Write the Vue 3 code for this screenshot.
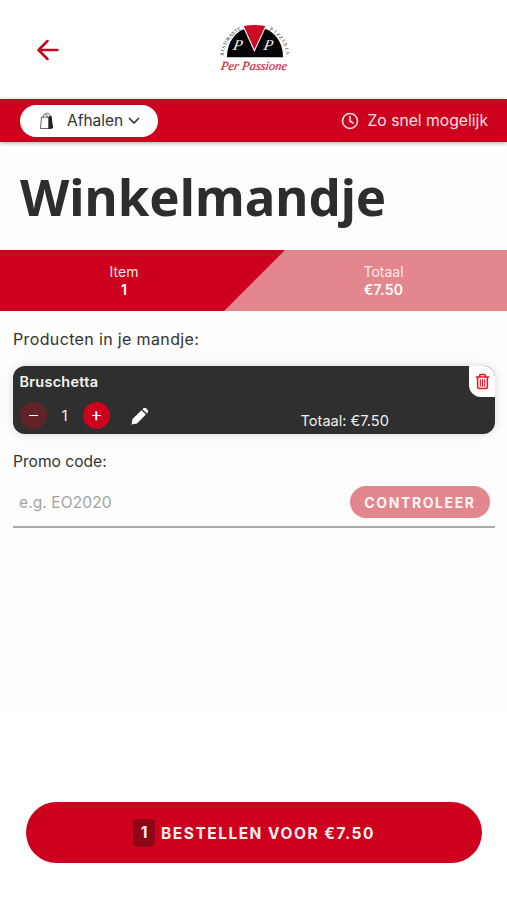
<script setup>
  import { ref, computed } from "vue"

  const price = 7.5
  const count = ref(1)
  const promo = ref("")

  const total = computed(() => "€" + (price * count.value).toFixed(2))

  // letters around the dome of the logo, angles measured from the top
  const arc = [...spread("RISTORANTE", -83, -29), ...spread("PIZZERIA", 30, 81)]

  function spread(word, from, to) {
    const step = (to - from) / (word.length - 1)
    return [...word].map((letter, i) => ({ letter, angle: from + i * step }))
  }

  function decrease() {
    if (count.value > 1) count.value--
  }
</script>

<template>
  <div class="page">
    <header class="header">
      <svg class="back" viewBox="0 0 24 22" fill="none" stroke="#c40a22" stroke-width="2.5" stroke-linecap="round" stroke-linejoin="round">
        <path d="M21.500 11H3M11.500 2L2.500 11l9 9" />
      </svg>
      <svg class="logo" viewBox="0 0 80 54">
        <path d="M13 35.300C13 17 25 5 41 5s28 12 28 30.300z" fill="#050505" />
        <path d="M27.800 2.500Q40.500 -0.500 53.200 2.500L40.400 30z" fill="#fff" />
        <path d="M29.700 4Q40.500 1.800 51.300 4L40.400 27.500z" fill="#cf0a25" />
        <g class="logo-letters">
          <text transform="translate(18.500 27.500) skewX(-12)">P</text>
          <text transform="translate(49 27.500) skewX(-12)">P</text>
        </g>
        <g class="logo-arc">
          <text v-for="(a, i) in arc" :key="i" :transform="`translate(41 36) rotate(${a.angle}) translate(0 -31.5)`">{{ a.letter }}</text>
        </g>
        <text class="logo-name" transform="translate(6.500 48) skewX(-8)" textLength="66">Per Passione</text>
      </svg>
    </header>

    <div class="toolbar">
      <button class="method">
        <svg class="bag" viewBox="0 0 15 18" fill="none" stroke="#333" stroke-width="1">
          <path d="M2.500 5L1.500 16.500h8.500V5z" stroke="#666" />
          <path d="M10 5l2-1 1.600 12-3.600.500z" fill="#222" stroke="#222" />
          <path d="M4.200 6.500V4a2 2 0 0 1 4 0v2.500M6 2.200q3.500-2.500 4.500 1v1.500" stroke="#666" stroke-width=".9" />
        </svg>
        <span>Afhalen</span>
        <svg class="chevron" viewBox="0 0 12 8" fill="none" stroke="#333" stroke-width="1.700" stroke-linecap="round" stroke-linejoin="round">
          <path d="M1.500 1.500L6 6l4.500-4.500" />
        </svg>
      </button>
      <div class="time">
        <svg viewBox="0 0 18 18" fill="none" stroke="currentColor" stroke-width="1.600" stroke-linecap="round" stroke-linejoin="round">
          <circle cx="9" cy="9" r="7.500" />
          <path d="M9 4.500V9l3 2" />
        </svg>
        <span>Zo snel mogelijk</span>
      </div>
    </div>

    <main class="content">
      <h1>Winkelmandje</h1>

      <div class="summary">
        <div class="summary-item">
          <span>Item</span>
          <b>{{ count }}</b>
        </div>
        <div class="summary-total">
          <span>Totaal</span>
          <b>{{ total }}</b>
        </div>
      </div>

      <p class="label products">Producten in je mandje:</p>

      <div class="product">
        <button class="remove">
          <svg viewBox="0 0 16 18" fill="none" stroke="#e5162c" stroke-width="1.700" stroke-linecap="round" stroke-linejoin="round">
            <path d="M1.500 4.200h13M5 4V2.500Q5 1.500 6 1.500h4q1 0 1 1V4M2.800 4.500v10.300q0 1.700 1.700 1.700h7q1.700 0 1.700-1.700V4.500" />
            <path d="M5.700 7v7M8 7v7M10.300 7v7" stroke-width="1.100" />
          </svg>
        </button>
        <div class="product-name">Bruschetta</div>
        <div class="product-row">
          <button class="round minus" @click="decrease"></button>
          <span class="count">{{ count }}</span>
          <button class="round plus" @click="count++"></button>
          <svg class="pencil" viewBox="0 0 18 18" fill="#fff">
            <path d="M.5 17.500l1-5.500L10.500 3.200l4.300 4.300L6 16.500zM11.500 2.200l1-1q1.300-.9 2.500.1l1.700 1.700q1.100 1.300.1 2.500l-1 1z" />
          </svg>
          <span class="product-total">Totaal: {{ total }}</span>
        </div>
      </div>

      <p class="label promo-label">Promo code:</p>

      <div class="promo">
        <input v-model="promo" placeholder="e.g. EO2020" />
        <button>CONTROLEER</button>
      </div>
    </main>

    <footer class="footer">
      <button class="order">
        <span class="badge">{{ count }}</span>
        <span>BESTELLEN VOOR {{ total }}</span>
      </button>
    </footer>
  </div>
</template>

<style>
  body {
    margin: 0;
    background: #fff;
  }
</style>

<style scoped>
  .page {
    display: flex;
    flex-direction: column;
    height: 900px;
    overflow: hidden;
    color: #333;
    font-family: Inter, "Liberation Sans", sans-serif;
    font-size: 16px;
  }

  button {
    padding: 0;
    border: 0;
    color: inherit;
    font: inherit;
    cursor: pointer;
  }

  .header {
    display: grid;
    grid-template-columns: 1fr 80px 1fr;
    height: 98.500px;
    flex: none;
  }

  .back {
    width: 24px;
    height: 22px;
    margin: 39px 0 0 36px;
  }

  .logo {
    width: 80px;
    height: 54px;
    margin-top: 22px;
  }

  .logo-letters {
    fill: #fff;
    font: italic 15px "Liberation Serif", serif;
  }

  .logo-arc {
    fill: #333;
    font: 5px "Liberation Serif", serif;
    text-anchor: middle;
  }

  .logo-name {
    fill: #d3203a;
    stroke: #d3203a;
    stroke-width: 0.2;
    font: italic 12.500px "Liberation Serif", serif;
  }

  .toolbar {
    position: relative;
    display: flex;
    align-items: center;
    justify-content: space-between;
    box-sizing: border-box;
    height: 43.500px;
    flex: none;
    padding: 1px 19px 0 20px;
    background: #cd001e;
    box-shadow: 0 1px 4px rgba(0, 0, 0, 0.35);
  }

  .method {
    display: flex;
    align-items: center;
    box-sizing: border-box;
    width: 138px;
    height: 32px;
    padding-left: 19px;
    border-radius: 16px;
    background: #fff;
    font-size: 15.5px;
  }

  .bag {
    width: 15px;
    height: 18px;
    margin-right: 13px;
  }

  .chevron {
    width: 12px;
    height: 8px;
    margin-left: 5px;
  }

  .time {
    display: flex;
    align-items: center;
    gap: 8px;
    color: #fbe3e6;
    font-size: 15.700px;

    svg {
      width: 18px;
      height: 18px;
    }
  }

  .content {
    height: 570px;
    flex: none;
    background: #fdfdfd;
  }

  h1 {
    height: 108px;
    margin: 0;
    padding-left: 20px;
    color: #2d2d2d;
    font: bold 51px/108px "Noto Sans", sans-serif;
  }

  .summary {
    position: relative;
    display: grid;
    grid-template-columns: 248px 1fr;
    height: 61px;
    background: #e3868d;
    color: #fbe9e9;
    font-size: 14px;
    line-height: 18px;
    text-align: center;

    &:before {
      position: absolute;
      inset: 0;
      content: "";
      background: #cd001e;
      clip-path: polygon(0 0, 285px 0, 224px 100%, 0 100%);
    }

    > div {
      position: relative;
      display: flex;
      flex-direction: column;
      padding-top: 13px;
    }

    b {
      color: #fff;
      font-weight: 600;
      letter-spacing: 0.3px;
    }
  }

  .summary-total {
    margin-left: 12px;
  }

  .label {
    margin: 0 13px;
    line-height: 20px;
  }

  .products {
    padding-top: 18px;
    letter-spacing: 0.360px;
  }

  .product {
    position: relative;
    box-sizing: border-box;
    height: 68px;
    margin: 17px 12px 0 13px;
    padding: 7px 6px 0 6.500px;
    overflow: hidden;
    border-radius: 12px;
    background: #2f2f2f;
    box-shadow: 0 0 8px rgba(0, 0, 0, 0.15);
    color: #eee;
  }

  .product-name {
    color: #f4f4f4;
    font-size: 14.5px;
    font-weight: 600;
    letter-spacing: 0.25px;
    line-height: 18px;
  }

  .product-row {
    display: flex;
    align-items: center;
    margin-top: 10px;
  }

  .round {
    position: relative;
    width: 27px;
    height: 27px;
    border-radius: 50%;
    background: #cd001e;

    &:before,
    &.plus:after {
      position: absolute;
      top: 12.5px;
      left: 9px;
      width: 9px;
      height: 1.500px;
      content: "";
      background: #fff;
    }

    &.plus:after {
      transform: rotate(90deg);
    }
  }

  .minus {
    background: #622328;
  }

  .count {
    width: 36px;
    text-align: center;
    font-size: 15px;
  }

  .pencil {
    width: 18px;
    height: 18px;
    margin-left: 21px;
  }

  .product-total {
    margin: 11px 0 0 152px;
    font-size: 14.600px;
    line-height: 18px;
  }

  .remove {
    position: absolute;
    top: 0;
    right: 0;
    display: grid;
    place-items: center;
    width: 26px;
    height: 31px;
    border-radius: 0 0 0 12px;
    background: #fff;

    svg {
      width: 15px;
      height: 17px;
    }
  }

  .promo-label {
    padding-top: 18px;
    font-size: 15.600px;
  }

  .promo {
    display: flex;
    align-items: center;
    justify-content: space-between;
    box-sizing: border-box;
    height: 55px;
    margin: 1px 12px 0 13px;
    padding: 5px 5px 0 6px;
    border-bottom: 2px solid #aaa;

    input {
      width: 250px;
      padding: 0;
      border: 0;
      outline: 0;
      background: none;
      font: 15.5px Inter, sans-serif;
      letter-spacing: 0.1px;

      &::placeholder {
        color: #a2a2a2;
      }
    }

    button {
      width: 140px;
      height: 32px;
      border-radius: 16px;
      background: #e3868d;
      color: #fff7f5;
      font-size: 14px;
      font-weight: 700;
      letter-spacing: 1.6px;
    }
  }

  .footer {
    padding: 90px 25px 0 26px;
  }

  .order {
    display: flex;
    align-items: center;
    justify-content: center;
    gap: 6px;
    box-sizing: border-box;
    width: 100%;
    height: 61px;
    padding-top: 1px;
    border-radius: 31px;
    background: #cd001e;
    color: #fff0f0;
    font-size: 15.5px;
    font-weight: 650;
    letter-spacing: 1.5px;
  }

  .badge {
    width: 22px;
    border-radius: 5px;
    background: #8f0717;
    line-height: 28px;
    letter-spacing: 0;
  }
</style>
